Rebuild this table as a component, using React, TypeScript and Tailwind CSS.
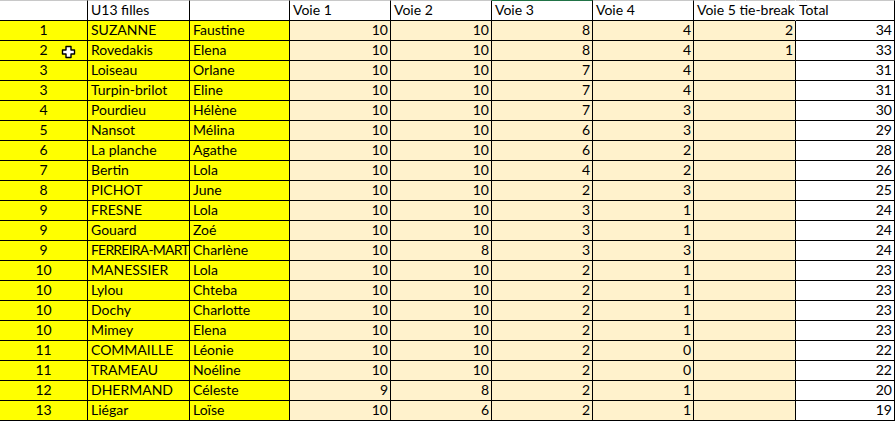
import React from 'react';

type Row = [string, string, string, string, string, string, string, string, string];

const rows: Row[] = [
  ['1', 'SUZANNE', 'Faustine', '10', '10', '8', '4', '2', '34'],
  ['2', 'Rovedakis', 'Elena', '10', '10', '8', '4', '1', '33'],
  ['3', 'Loiseau', 'Orlane', '10', '10', '7', '4', '', '31'],
  ['3', 'Turpin-brilot', 'Eline', '10', '10', '7', '4', '', '31'],
  ['4', 'Pourdieu', 'Hélène', '10', '10', '7', '3', '', '30'],
  ['5', 'Nansot', 'Mélina', '10', '10', '6', '3', '', '29'],
  ['6', 'La planche', 'Agathe', '10', '10', '6', '2', '', '28'],
  ['7', 'Bertin', 'Lola', '10', '10', '4', '2', '', '26'],
  ['8', 'PICHOT', 'June', '10', '10', '2', '3', '', '25'],
  ['9', 'FRESNE', 'Lola', '10', '10', '3', '1', '', '24'],
  ['9', 'Gouard', 'Zoé', '10', '10', '3', '1', '', '24'],
  ['9', 'FERREIRA-MART', 'Charlène', '10', '8', '3', '3', '', '24'],
  ['10', 'MANESSIER', 'Lola', '10', '10', '2', '1', '', '23'],
  ['10', 'Lylou', 'Chteba', '10', '10', '2', '1', '', '23'],
  ['10', 'Dochy', 'Charlotte', '10', '10', '2', '1', '', '23'],
  ['10', 'Mimey', 'Elena', '10', '10', '2', '1', '', '23'],
  ['11', 'COMMAILLE', 'Léonie', '10', '10', '2', '0', '', '22'],
  ['11', 'TRAMEAU', 'Noéline', '10', '10', '2', '0', '', '22'],
  ['12', 'DHERMAND', 'Céleste', '9', '8', '2', '1', '', '20'],
  ['13', 'Liégar', 'Loïse', '10', '6', '2', '1', '', '19'],
];

const headers = ['', 'U13 filles', '', 'Voie 1', 'Voie 2', 'Voie 3', 'Voie 4', 'Voie 5 tie-break', 'Total'];

const CellCursor = () => (
  <svg className="absolute left-[61px] top-[45px]" width="15" height="14" viewBox="0 0 15 14">
    <path
      d="M5 1.5h5v3.5h3.5v4h-3.5v3.5h-5v-3.5h-3.5v-4h3.5z"
      fill="#fff"
      stroke="#000"
      strokeWidth="1.4"
      strokeLinejoin="round"
    />
  </svg>
);

const App: React.FC = () => {
  return (
    <div className="relative w-[896px] h-[421px] bg-white overflow-hidden text-[14px] text-black font-['Lato','Liberation_Sans',sans-serif]">
      <div className="grid grid-cols-[88px_102px_100px_101px_101px_101px_101px_102px_99px]">
        {/* header row */}
        {headers.map((h, i) => (
          <div
            key={'h' + i}
            className={`h-[21px] flex items-end pl-[3px] pb-[2px] overflow-hidden whitespace-nowrap leading-[17px] border-t border-b border-r border-b-black ${
              i === 5 ? 'border-t-[#217346]' : 'border-t-[#c8c8c8]'
            } ${i === 7 ? 'border-r-white' : 'border-r-black'}`}
          >
            {h}
          </div>
        ))}

        {/* data rows */}
        {rows.map((r, ri) =>
          r.map((v, ci) => {
            let bg = 'bg-[#fff2cc]';
            if (ci <= 2) bg = 'bg-[#ffff00]';
            if (ci === 8) bg = 'bg-white';
            let align = 'justify-end pr-[2px]';
            if (ci === 0) align = 'justify-center';
            if (ci === 1 || ci === 2) align = 'justify-start pl-[3px]';
            // long surname runs up to the next cell's border
            const tight = v.startsWith('FERREIRA') ? 'tracking-[-0.8px] pl-[2px]' : '';
            return (
              <div
                key={ri + '-' + ci}
                className={`h-[20px] flex items-end pb-[2px] leading-[17px] overflow-hidden whitespace-nowrap border-r border-b border-black ${bg} ${align} ${tight}`}
              >
                {v}
              </div>
            );
          })
        )}
      </div>
      <CellCursor />
    </div>
  );
};

export default App;
